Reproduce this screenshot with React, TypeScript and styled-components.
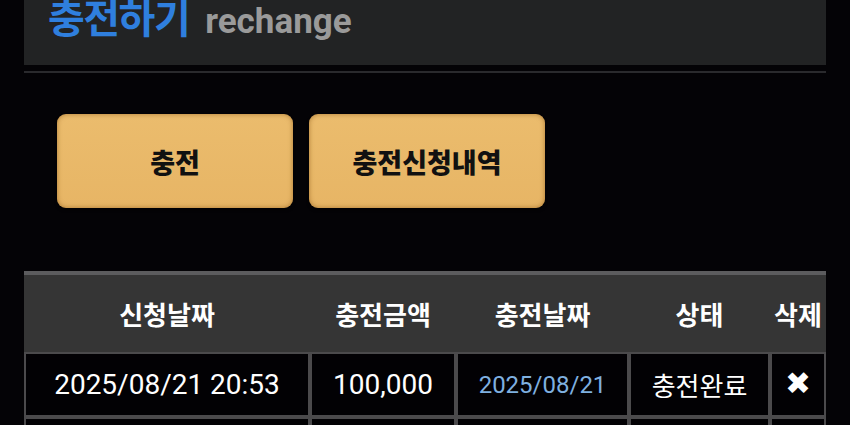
import React from 'react';
import styled, { createGlobalStyle } from 'styled-components';

const GlobalStyle = createGlobalStyle`
  html, body {
    margin: 0;
    padding: 0;
    background: #040306;
  }
  body {
    font-family: Roboto, "Noto Sans CJK KR", sans-serif;
    color: #fff;
  }
`;

const Page = styled.div`
  width: 850px;
  height: 425px;
  overflow: hidden;
  padding: 0 24px;
  box-sizing: border-box;
  background: #040306;
`;

const TitleBar = styled.div`
  height: 65px;
  background: #222324;
  display: flex;
  align-items: baseline;
  padding-left: 24px;
  gap: 16px;
  box-sizing: border-box;
  margin-bottom: 6px;
  overflow: hidden;
`;

const TitleKo = styled.h1`
  margin: -9px 0 0;
  font-family: "Noto Sans CJK KR", sans-serif;
  font-weight: 700;
  font-size: 40px;
  line-height: 50px;
  color: #2f7fde;
  letter-spacing: -1.5px;
`;

const TitleEn = styled.span`
  font-family: Roboto, sans-serif;
  font-weight: 700;
  font-size: 35px;
  color: #9a9a9a;
`;

const TitleRule = styled.div`
  height: 2px;
  background: #2a2a2d;
`;

const ButtonRow = styled.div`
  display: flex;
  gap: 16px;
  padding: 41px 0 0 33px;
  height: 198px;
  box-sizing: border-box;
`;

const GoldButton = styled.button`
  width: 236px;
  height: 94px;
  border: none;
  border-radius: 9px;
  background: linear-gradient(#ebbc6d, #e7b565);
  box-shadow: inset 0 0 5px rgba(120, 70, 10, 0.55), 0 2px 3px rgba(0, 0, 0, 0.6);
  font-family: "Noto Sans CJK KR", sans-serif;
  font-weight: 900;
  font-size: 27px;
  color: #111;
  cursor: pointer;
`;

const Table = styled.table`
  width: 802px;
  table-layout: fixed;
  border-collapse: separate;
  border-spacing: 0;
  border-top: 4px solid #5c5c5e;
`;

const HeadCell = styled.th`
  height: 77px;
  padding: 0;
  background: #353535;
  font-family: "Noto Sans CJK KR", sans-serif;
  font-weight: 700;
  font-size: 26px;
  color: #fff;
  text-align: center;
  white-space: nowrap;
  overflow: visible;
`;

const Cell = styled.td<{ $accent?: boolean; $icon?: boolean; $ko?: boolean }>`
  height: 61px;
  padding: 0;
  background: #020104;
  border: 2px solid #4b4a4c;
  text-align: center;
  white-space: nowrap;
  font-family: ${p => (p.$ko ? '"Noto Sans CJK KR", sans-serif' : 'Roboto, "Noto Sans CJK KR", sans-serif')};
  font-size: ${p => (p.$accent ? '24px' : p.$ko ? '26px' : '28px')};
  font-weight: ${p => (p.$icon ? 700 : 400)};
  color: ${p => (p.$accent ? '#7fb0e0' : '#fff')};
`;

const XMark = styled.span`
  font-family: "DejaVu Sans", sans-serif;
  font-size: 31px;
  line-height: 1;
`;

const columns = [
  { label: '신청날짜', width: 286 },
  { label: '충전금액', width: 146 },
  { label: '충전날짜', width: 173 },
  { label: '상태', width: 141 },
  { label: '삭제', width: 56 },
];

const rows = [
  { requested: '2025/08/21 20:53', amount: '100,000', charged: '2025/08/21', status: '충전완료' },
  { requested: '2025/08/20 18:12', amount: '50,000', charged: '2025/08/20', status: '충전완료' },
];

export default function App() {
  return (
    <>
      <GlobalStyle />
      <Page>
        <TitleBar>
          <TitleKo>충전하기</TitleKo>
          <TitleEn>rechange</TitleEn>
        </TitleBar>
        <TitleRule />
        <ButtonRow>
          <GoldButton>충전</GoldButton>
          <GoldButton>충전신청내역</GoldButton>
        </ButtonRow>
        <Table>
          <colgroup>
            {columns.map(c => (
              <col key={c.label} style={{ width: c.width }} />
            ))}
          </colgroup>
          <thead>
            <tr>
              {columns.map(c => (
                <HeadCell key={c.label}>{c.label}</HeadCell>
              ))}
            </tr>
          </thead>
          <tbody>
            {rows.map((r, i) => (
              <tr key={i}>
                <Cell>{r.requested}</Cell>
                <Cell>{r.amount}</Cell>
                <Cell $accent>{r.charged}</Cell>
                <Cell $ko>{r.status}</Cell>
                <Cell $icon>
                  <XMark>✖</XMark>
                </Cell>
              </tr>
            ))}
          </tbody>
        </Table>
      </Page>
    </>
  );
}
